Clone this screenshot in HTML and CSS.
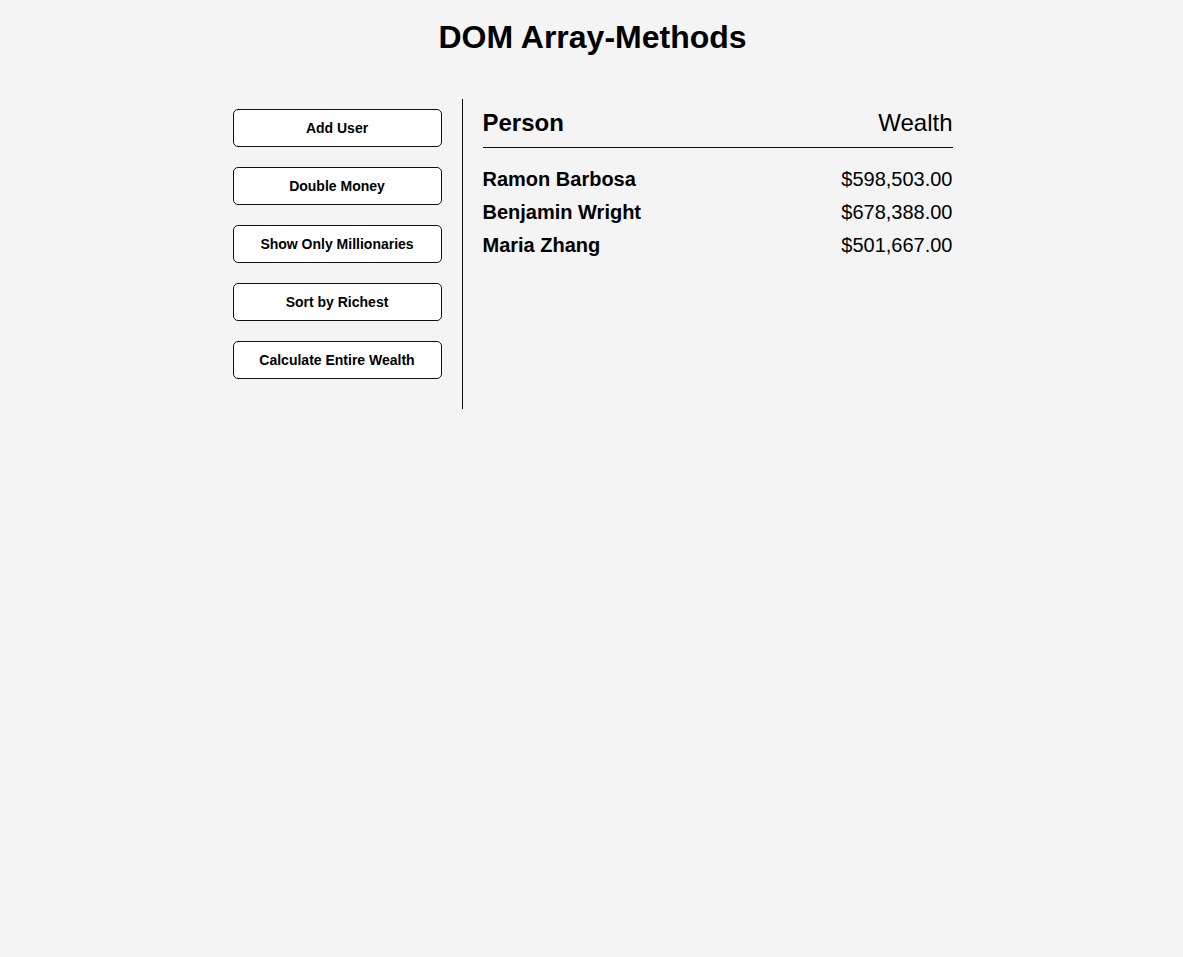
FILE: index.html
```html
<!DOCTYPE html>
<html lang="en">
<head>
<meta charset="UTF-8">
<title>DOM Array Methods</title>
<link rel="stylesheet" href="styles.css">
</head>
<body>
<h1>DOM Array-Methods</h1>
<div class="container">
  <aside class="sidebar">
    <button class="btn">Add User</button>
    <button class="btn">Double Money</button>
    <button class="btn">Show Only Millionaries</button>
    <button class="btn">Sort by Richest</button>
    <button class="btn">Calculate Entire Wealth</button>
  </aside>
  <main class="main">
    <h2 class="table-head"><strong class="name">Person</strong> Wealth</h2>
    <div class="person"><strong class="name">Ramon Barbosa</strong> $598,503.00</div>
    <div class="person"><strong class="name">Benjamin Wright</strong> $678,388.00</div>
    <div class="person"><strong class="name">Maria Zhang</strong> $501,667.00</div>
  </main>
</div>
</body>
</html>
```
FILE: styles.css
```css
* { box-sizing: border-box; }
html, body { height: 100%; }
body {
  margin: 0;
  background: #f4f4f4;
  font-family: "Liberation Sans", Arial, sans-serif;
  color: #000;
}
h1 {
  margin: 19px 0 0;
  padding-left: 2px;
  font-size: 32px;
  line-height: 37px;
  text-align: center;
  font-weight: bold;
}
.container {
  display: flex;
  width: 802px;
  margin: 43px auto 0;
  padding: 0 20px 0 22px;
}
.sidebar {
  width: 250px;
  padding: 10px 20px;
  border-right: 1px solid #111;
  display: flex;
  flex-direction: column;
}
.btn {
  display: block;
  width: 100%;
  background: #fff;
  border: 1px solid #111;
  border-radius: 5px;
  padding: 10px;
  margin: 0 0 20px;
  font-family: "Liberation Sans", Arial, sans-serif;
  font-weight: bold;
  font-size: 14px;
  line-height: 16px;
  color: #000;
  cursor: pointer;
}
.main {
  flex: 1;
  padding: 10px 20px;
}
.table-head {
  display: flex;
  justify-content: space-between;
  margin: 0 0 20px;
  padding-bottom: 10px;
  border-bottom: 1px solid #111;
  font-size: 24px;
  line-height: 28px;
  font-weight: 400;
}
.name { font-weight: 700; }
.person {
  display: flex;
  justify-content: space-between;
  font-size: 20px;
  line-height: 23px;
  margin-bottom: 10px;
}
```
